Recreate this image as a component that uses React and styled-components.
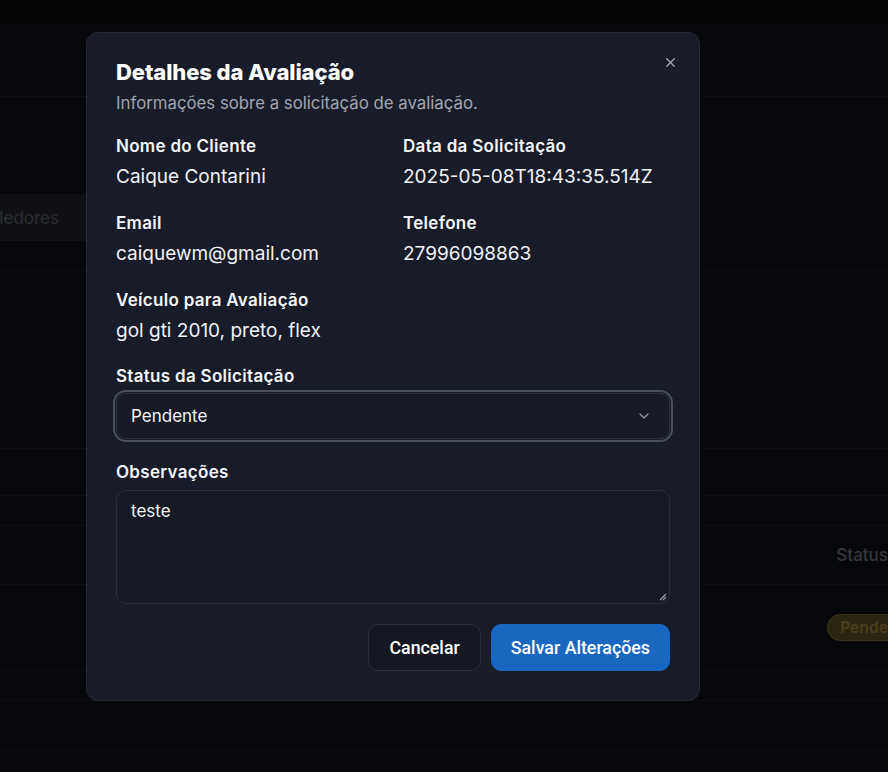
import React from "react";
import styled, { createGlobalStyle } from "styled-components";

const Global = createGlobalStyle`
  html, body { margin: 0; padding: 0; background: #07080b; }
  body { font-family: Inter, "Noto Sans", sans-serif; overflow: hidden; }
  * { box-sizing: border-box; }
`;

const Page = styled.div`
  width: 888px;
  height: 772px;
  background: #07080b;
  display: flex;
  flex-direction: column;
  overflow: hidden;
`;

const Band = styled.div`
  height: ${(p) => p.$h}px;
  border-bottom: 1px solid ${(p) => (p.$line ? "#0e1014" : "transparent")};
  background: ${(p) => p.$bg || "transparent"};
  display: flex;
  align-items: ${(p) => p.$align || "center"};
  justify-content: ${(p) => p.$justify || "flex-start"};
  padding-bottom: ${(p) => p.$pb || 0}px;
  flex-shrink: 0;
`;

const Tab = styled.div`
  width: 86px;
  height: 47px;
  background: #101114;
  color: #2c2d31;
  font-size: 17px;
  display: flex;
  align-items: center;
  justify-content: flex-end;
  padding-right: 27px;
  white-space: nowrap;
  overflow: hidden;
`;

const GhostText = styled.div`
  color: #36373b;
  font-size: 17px;
  font-weight: 500;
  white-space: nowrap;
`;

const GhostBadge = styled.div`
  height: 27px;
  display: flex;
  align-items: center;
  flex-shrink: 0;
  background: #2a2413;
  border: 1px solid #3b3318;
  border-right: none;
  color: #4a3d1c;
  font-size: 15.5px;
  font-weight: 700;
  border-radius: 999px 0 0 999px;
  padding: 0 0 0 12px;
  white-space: nowrap;
`;

const Overlay = styled.div`
  position: fixed;
  inset: 0;
`;

const Dialog = styled.div`
  position: absolute;
  left: 86px;
  top: 32px;
  width: 614px;
  background: #181c28;
  border: 1px solid #262a36;
  border-radius: 12px;
  padding: 25px 29px 29px;
  display: flex;
  flex-direction: column;
  color: #f3f4f6;
`;

const Close = styled.button`
  position: absolute;
  right: 20px;
  top: 20px;
  width: 18px;
  height: 18px;
  padding: 0;
  border: none;
  background: transparent;
  color: #a3a8b3;
  display: flex;
  align-items: center;
  justify-content: center;
`;

const Title = styled.h2`
  margin: 0;
  font-size: 22px;
  line-height: 28px;
  font-weight: 800;
  letter-spacing: -0.1px;
  color: #ffffff;
`;

const Subtitle = styled.p`
  margin: 5px 0 0;
  font-size: 16.8px;
  line-height: 24px;
  color: #a1a5ae;
`;

const Grid = styled.div`
  display: grid;
  grid-template-columns: 1fr 1fr;
  column-gap: 20px;
  row-gap: 20px;
  margin-top: 19px;
`;

const Field = styled.div`
  display: flex;
  flex-direction: column;
  gap: ${(p) => p.$gap ?? 5}px;
  margin-top: ${(p) => p.$mt ?? 0}px;
`;

const Label = styled.div`
  font-size: 17px;
  line-height: 24px;
  font-weight: 600;
  letter-spacing: 0.3px;
  color: #f5f6f8;
`;

const Value = styled.div`
  font-size: 19px;
  line-height: 28px;
  color: #f1f2f4;
`;

const Select = styled.div`
  height: 46px;
  border: 1px solid #2c303c;
  border-radius: 10px;
  background: #161a25;
  box-shadow: 0 0 0 1px #181c28, 0 0 0 3px #4a4f5c;
  display: flex;
  align-items: center;
  justify-content: space-between;
  padding: 0 17px 0 14px;
  font-size: 17px;
  color: #f3f4f6;
`;

const TextArea = styled.div`
  position: relative;
  height: 114px;
  border: 1px solid #2a2e3a;
  border-radius: 10px;
  background: #161a25;
  padding: 8px 14px;
  font-size: 17px;
  line-height: 24px;
  color: #f3f4f6;
`;

const Grip = styled.svg`
  position: absolute;
  right: 2px;
  bottom: 2px;
`;

const Actions = styled.div`
  display: flex;
  justify-content: flex-end;
  gap: 10px;
  margin-top: 20px;
`;

const Button = styled.button`
  height: 47px;
  padding: 0 ${(p) => (p.$primary ? 19 : 20)}px;
  border-radius: 10px;
  border: 1px solid ${(p) => (p.$primary ? "#1a67c2" : "#2b2f3b")};
  background: ${(p) => (p.$primary ? "#1a67c2" : "#141823")};
  color: #ffffff;
  font-family: Roboto, Inter, sans-serif;
  font-size: 17.8px;
  font-weight: 500;
`;

export default function App() {
  return (
    <>
      <Global />
      <Page>
        <Band $h={24} $bg="#050507" />
        <Band $h={73} $line />
        <Band $h={174} $line $align="flex-end" $pb={29}>
          <Tab>ledores</Tab>
        </Band>
        <Band $h={178} $line />
        <Band $h={47} $line />
        <Band $h={30} $line />
        <Band $h={59} $line $justify="flex-end">
          <GhostText>Status</GhostText>
        </Band>
        <Band $h={86} $line $justify="flex-end">
          <GhostBadge>Pende</GhostBadge>
        </Band>
        <Band $h={30} $line />
        <Band $h={50} $line />
      </Page>
      <Overlay>
        <Dialog>
          <Close aria-label="Fechar">
            <svg width="15" height="15" viewBox="0 0 24 24" fill="none" stroke="currentColor" strokeWidth="2" strokeLinecap="round">
              <path d="M18 6 6 18" />
              <path d="m6 6 12 12" />
            </svg>
          </Close>
          <Title>Detalhes da Avaliação</Title>
          <Subtitle>Informações sobre a solicitação de avaliação.</Subtitle>
          <Grid>
            <Field>
              <Label>Nome do Cliente</Label>
              <Value>Caique Contarini</Value>
            </Field>
            <Field>
              <Label>Data da Solicitação</Label>
              <Value>2025-05-08T18:43:35.514Z</Value>
            </Field>
            <Field>
              <Label>Email</Label>
              <Value>caiquewm@gmail.com</Value>
            </Field>
            <Field>
              <Label>Telefone</Label>
              <Value>27996098863</Value>
            </Field>
            <Field>
              <Label>Veículo para Avaliação</Label>
              <Value>gol gti 2010, preto, flex</Value>
            </Field>
          </Grid>
          <Field $mt={19} $gap={5}>
            <Label>Status da Solicitação</Label>
            <Select>
              <span>Pendente</span>
              <svg width="16" height="16" viewBox="0 0 24 24" fill="none" stroke="#8b909b" strokeWidth="2" strokeLinecap="round" strokeLinejoin="round">
                <path d="m6 9 6 6 6-6" />
              </svg>
            </Select>
          </Field>
          <Field $mt={21} $gap={6}>
            <Label>Observações</Label>
            <TextArea>
              teste
              <Grip width="9" height="9" viewBox="0 0 9 9">
                <path d="M8 2 2 8M8 5 5 8" stroke="#9a9ea8" strokeWidth="1.2" />
              </Grip>
            </TextArea>
          </Field>
          <Actions>
            <Button>Cancelar</Button>
            <Button $primary>Salvar Alterações</Button>
          </Actions>
        </Dialog>
      </Overlay>
    </>
  );
}
